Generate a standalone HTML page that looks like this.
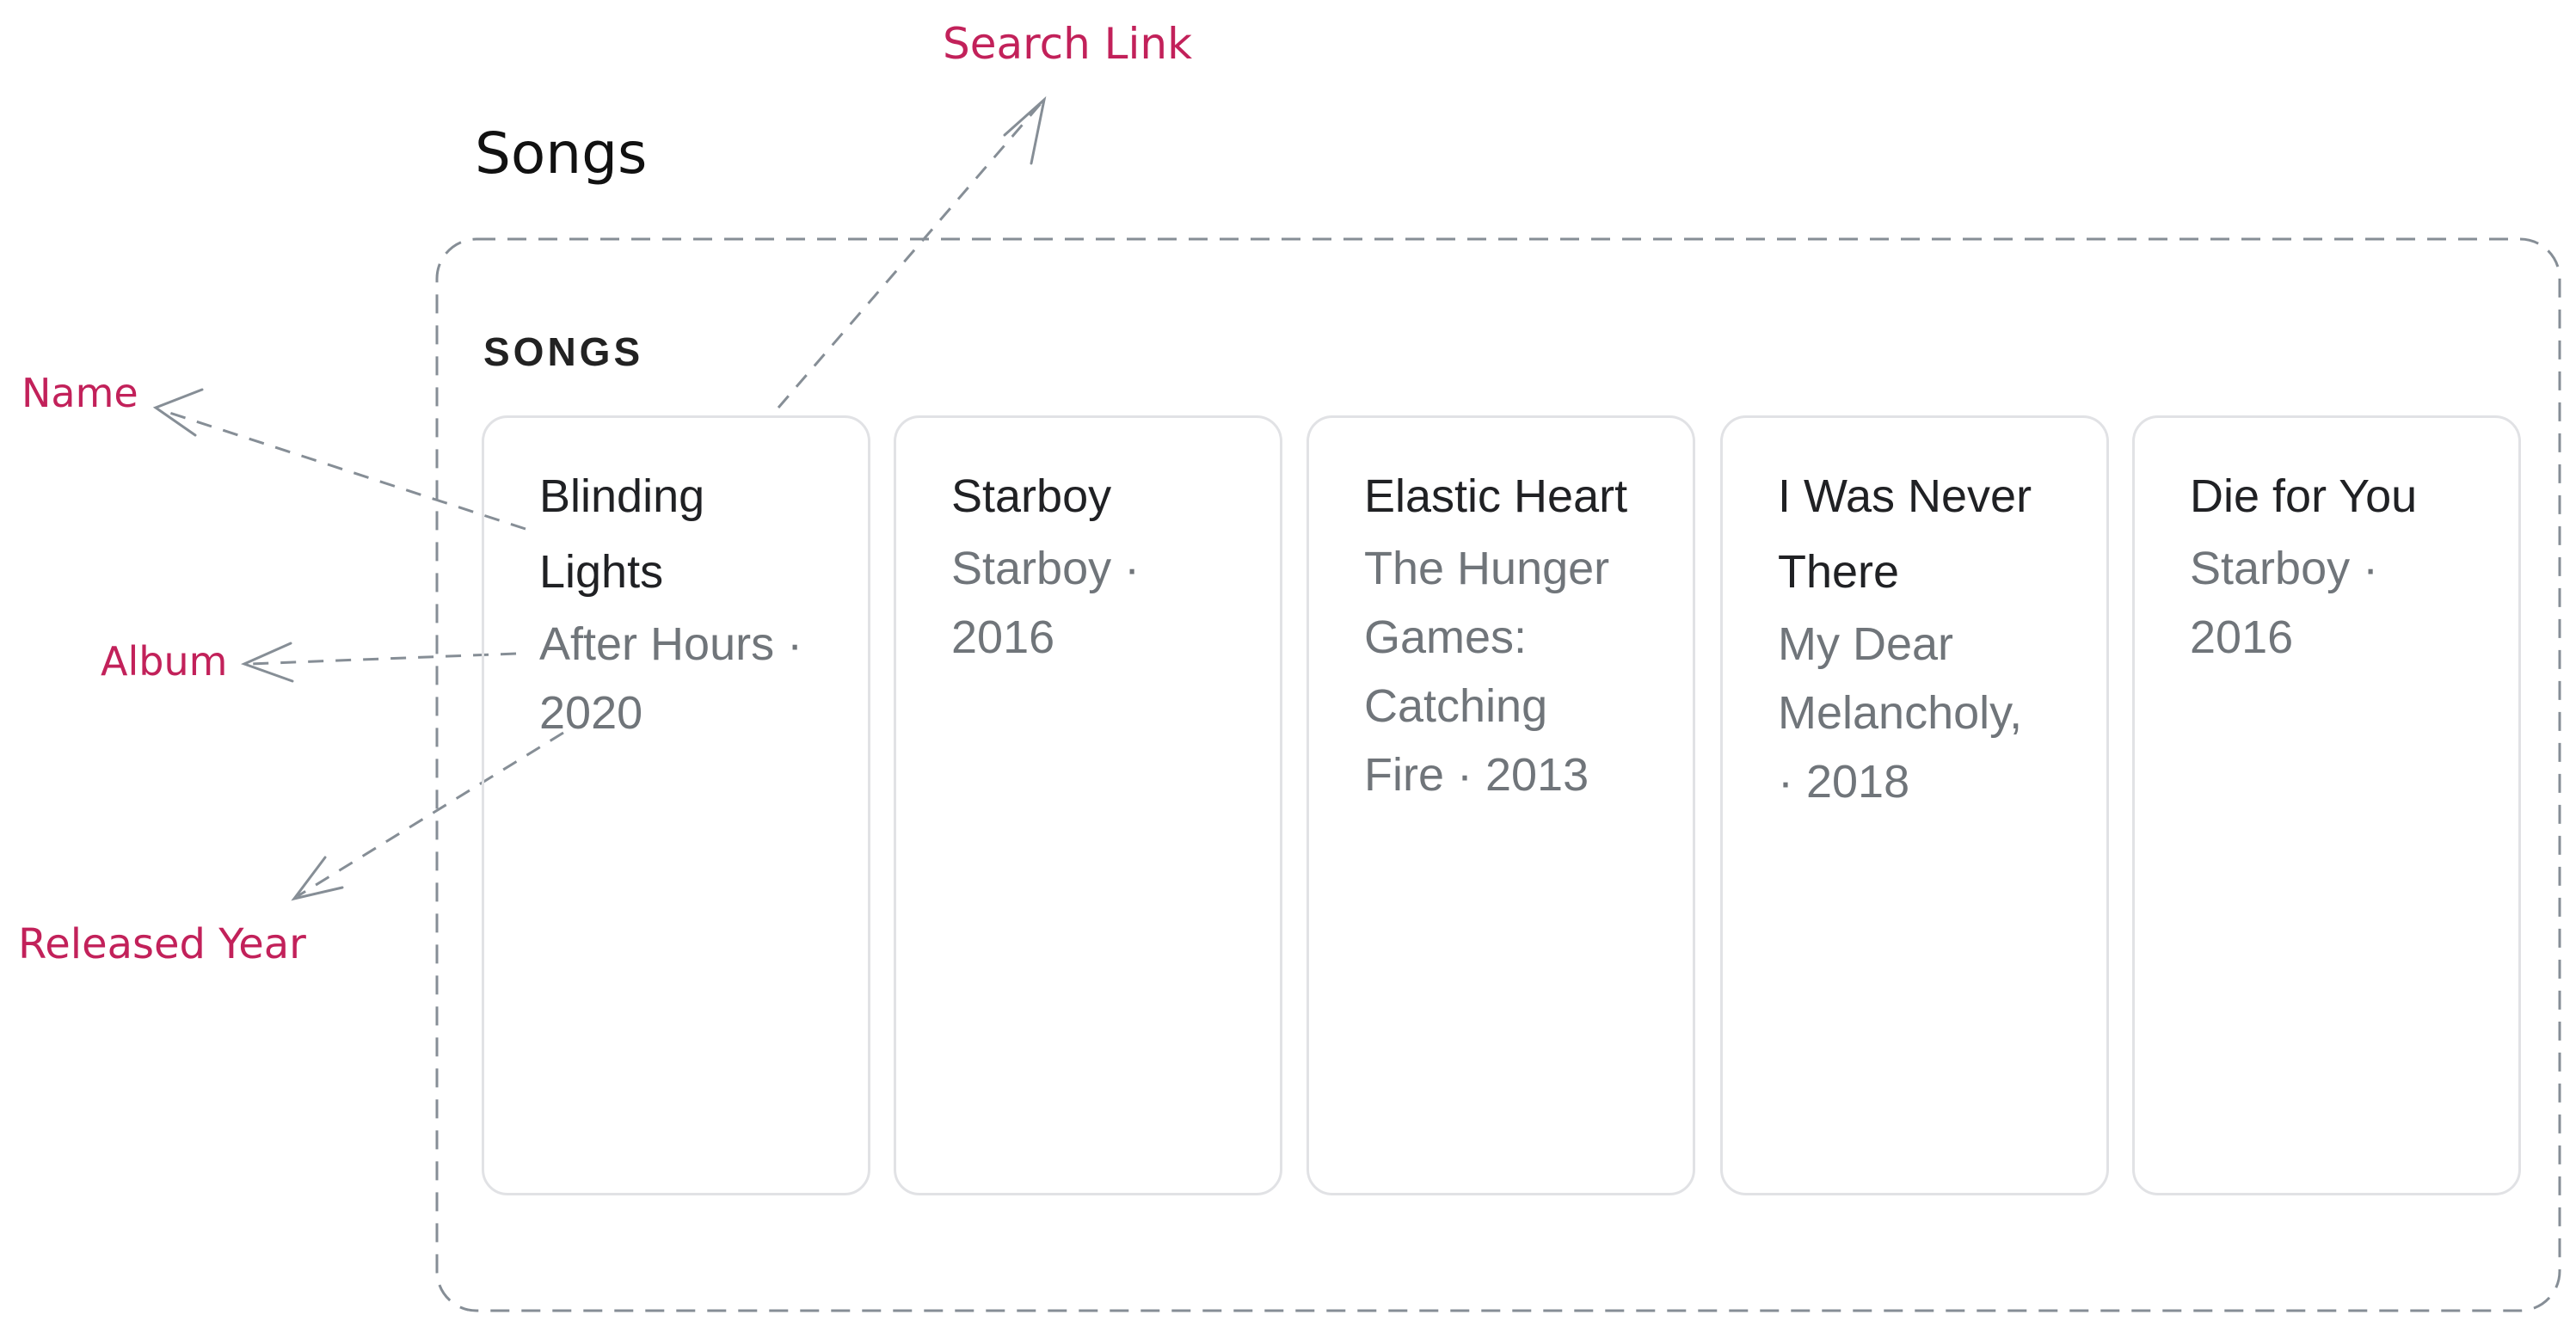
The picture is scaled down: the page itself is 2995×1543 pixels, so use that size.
<!DOCTYPE html>
<html><head><meta charset="utf-8"><style>
*{margin:0;padding:0;box-sizing:border-box}
body{width:2995px;height:1543px;background:#fff;position:relative;overflow:hidden;font-family:"Liberation Sans",sans-serif}
.hand{position:absolute;font-family:"DejaVu Sans",sans-serif;white-space:nowrap;font-weight:500}
.red{color:#c2215a}
.h{position:absolute;left:562px;top:382px;font-size:46px;font-weight:bold;letter-spacing:4px;color:#222}
.card{position:absolute;top:483px;width:452px;height:907px;border:3px solid #e1e2e5;border-radius:30px;padding:47px 36px 0 64px}
.t{font-size:54px;line-height:88px;color:#202124}
.s{font-size:54px;line-height:80px;color:#70757a}
</style></head><body>
<svg width="2995" height="1543" style="position:absolute;left:0;top:0" fill="none" stroke="#868e96" stroke-width="3">
<rect x="508" y="278" width="2468" height="1246" rx="46" stroke-dasharray="22 14"/>
<g stroke-dasharray="18 14">
<line x1="905" y1="474" x2="1212" y2="118"/>
<line x1="611" y1="615" x2="185" y2="476"/>
<line x1="600" y1="760" x2="290" y2="772"/>
<line x1="655" y1="852" x2="346" y2="1042"/>
</g>
<g stroke-linecap="round">
<polyline points="1168,157 1214,116 1199,190"/>
<polyline points="235,453 181,474 227,506"/>
<polyline points="338,748 284,772 340,792"/>
<polyline points="378,997 342,1045 398,1032"/>
</g>
</svg>
<div class="hand" style="left:552px;top:140px;font-size:66px;color:#111">Songs</div>
<div class="hand red" style="left:1096px;top:22px;font-size:50px">Search Link</div>
<div class="hand red" style="left:25px;top:430px;font-size:46px">Name</div>
<div class="hand red" style="left:117px;top:742px;font-size:46px">Album</div>
<div class="hand red" style="left:21px;top:1070px;font-size:48px">Released Year</div>
<div class="h">SONGS</div>
<div class="card" style="left:560px"><div class="t">Blinding<br>Lights</div><div class="s">After Hours ·<br>2020</div></div>
<div class="card" style="left:1039px"><div class="t">Starboy</div><div class="s">Starboy ·<br>2016</div></div>
<div class="card" style="left:1519px"><div class="t">Elastic Heart</div><div class="s">The Hunger<br>Games:<br>Catching<br>Fire · 2013</div></div>
<div class="card" style="left:2000px"><div class="t">I Was Never<br>There</div><div class="s">My Dear<br>Melancholy,<br>· 2018</div></div>
<div class="card" style="left:2479px"><div class="t">Die for You</div><div class="s">Starboy ·<br>2016</div></div>
</body></html>
